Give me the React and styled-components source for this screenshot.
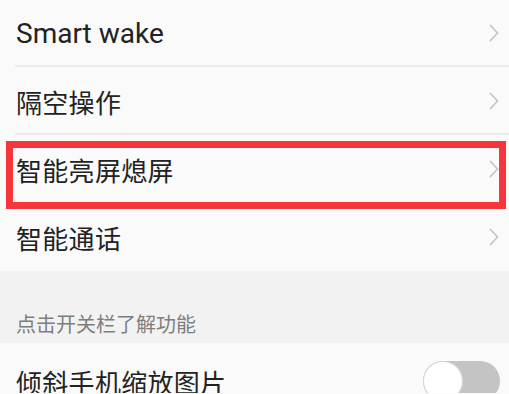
import React from "react";
import styled, { createGlobalStyle } from "styled-components";

const GlobalStyle = createGlobalStyle`
  html, body {
    margin: 0;
    padding: 0;
    background: #fafafa;
    overflow: hidden;
  }
  body {
    font-family: "Roboto", "Noto Sans CJK SC", sans-serif;
  }
`;

const items = [
  { label: "Smart wake", latin: true },
  { label: "隔空操作" },
  { label: "智能亮屏熄屏", marked: true },
  { label: "智能通话", last: true },
];

function Chevron() {
  return (
    <svg width="12" height="20" viewBox="0 0 12 20">
      <path
        d="M2.5 2.5 L9.5 10 L2.5 17.5"
        fill="none"
        stroke="#c6c6c6"
        strokeWidth="1.8"
        strokeLinecap="round"
        strokeLinejoin="round"
      />
    </svg>
  );
}

function App() {
  return (
    <Page>
      <GlobalStyle />
      <List>
        {items.map((item) => (
          <Row key={item.label} noDivider={item.last || item.marked}>
            <Label latin={item.latin}>{item.label}</Label>
            <Chevron />
            {item.marked && <Highlight />}
          </Row>
        ))}
      </List>
      <SectionHeader>点击开关栏了解功能</SectionHeader>
      <SwitchRow>
        <Label>倾斜手机缩放图片</Label>
        <Toggle>
          <Knob />
        </Toggle>
      </SwitchRow>
    </Page>
  );
}

export default App;

const Page = styled.div`
  width: 509px;
  height: 394px;
  margin-top: -1px;
  overflow: hidden;
  background: #fafafa;
`;

const List = styled.div`
  display: flex;
  flex-direction: column;
`;

const Row = styled.div`
  position: relative;
  height: 68px;
  box-sizing: border-box;
  display: flex;
  align-items: center;
  justify-content: space-between;
  padding: 0 9px 0 16px;
  &::after {
    content: "";
    display: ${(p) => (p.noDivider ? "none" : "block")};
    position: absolute;
    left: 15px;
    right: 0;
    bottom: 0;
    height: 2px;
    background: #ececec;
  }
`;

const Label = styled.span`
  font-size: ${(p) => (p.latin ? "28px" : "26px")};
  color: #222;
  letter-spacing: ${(p) => (p.latin ? "0" : "0.3px")};
`;

const Highlight = styled.div`
  position: absolute;
  top: 6px;
  bottom: -6px;
  left: 6px;
  right: 3px;
  border: 7px solid #f7363b;
  box-sizing: border-box;
  pointer-events: none;
`;

const SectionHeader = styled.div`
  height: 72px;
  box-sizing: border-box;
  background: #f2f2f2;
  display: flex;
  align-items: flex-end;
  padding: 0 0 5px 16px;
  font-size: 20px;
  color: #7e7e7e;
`;

const SwitchRow = styled.div`
  height: 68px;
  display: flex;
  align-items: center;
  justify-content: space-between;
  padding: 4px 9px 0 16px;
`;

const Toggle = styled.div`
  width: 77px;
  height: 40px;
  border-radius: 20px;
  background: #c4c4c4;
  display: flex;
  align-items: center;
`;

const Knob = styled.div`
  width: 38px;
  height: 38px;
  margin-left: 1px;
  border-radius: 50%;
  background: #fff;
  box-shadow: 0 0 0 1px #d8d8d8;
`;
